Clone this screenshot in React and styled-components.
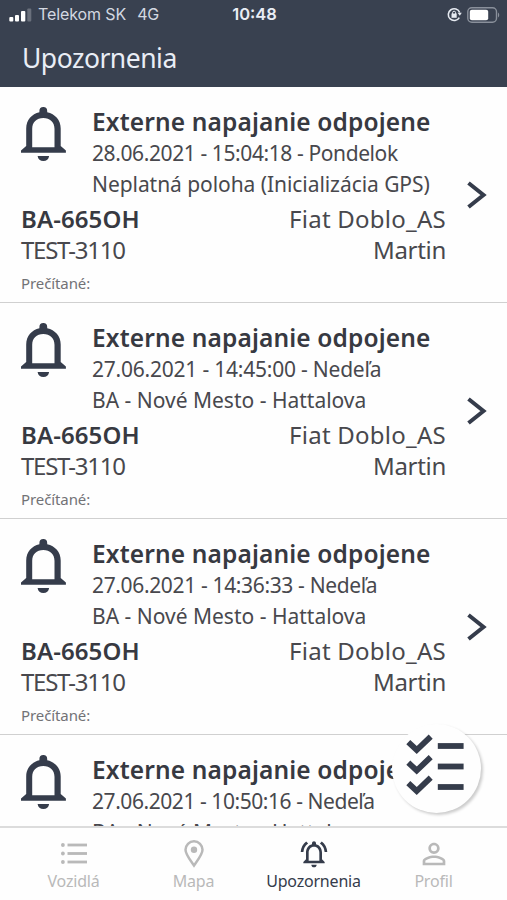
import React from 'react';
import styled, { createGlobalStyle, ThemeProvider } from 'styled-components';
import { MdOutlineNotificationsActive, MdPersonOutline } from 'react-icons/md';

const theme = {
  colors: {
    primary: '#394150',
    icon: '#353c4b',
    white: '#fefefe',
    border: '#d0d0d0',
    text: { title: '#373941', main: '#48484d', hint: '#727276', muted: '#b9b9b9' },
  },
  font: {
    main: "'Noto Sans', 'Open Sans', sans-serif",
    system: "Inter, 'Liberation Sans', sans-serif",
  },
};

const GlobalStyle = createGlobalStyle`
  *, *::before, *::after {
    box-sizing: border-box;
  }
  body {
    margin: 0;
    background: #fefefe;
  }
`;

const Root = styled.div`
  position: relative;
  display: flex;
  flex-direction: column;
  width: 507px;
  height: 900px;
  overflow: hidden;
  white-space: nowrap;
  font-family: ${(p) => p.theme.font.main};
  color: ${(p) => p.theme.colors.text.main};
  background-color: ${(p) => p.theme.colors.white};
`;

const Header = styled.header`
  flex: none;
  height: 87px;
  color: #e9edf5;
  background-color: ${(p) => p.theme.colors.primary};
`;

const StatusBar = styled.div`
  display: grid;
  grid-template-columns: 1fr auto 1fr;
  align-items: center;
  height: 29px;
  padding: 0 7px 0 9px;
  font-family: ${(p) => p.theme.font.system};
  font-size: 16px;
  line-height: 29px;
`;

const Carrier = styled.div`
  display: flex;
  align-items: center;
  color: #d3d8e1;
`;

const CarrierName = styled.span`
  margin-left: 6px;
  letter-spacing: -0.1px;
`;

const Network = styled.span`
  margin-left: 11px;
  letter-spacing: -0.3px;
`;

const Time = styled.div`
  font-size: 16.5px;
  font-weight: 600;
`;

const StatusIcons = styled.div`
  display: flex;
  align-items: center;
  justify-content: flex-end;
  gap: 5px;
`;

const PageTitle = styled.h1`
  margin: 12px 0 0 22px;
  font-size: 26.5px;
  font-weight: 400;
  line-height: 34px;
  letter-spacing: -0.5px;
`;

const List = styled.main`
  flex: 1;
  min-height: 0;
  overflow: hidden;
`;

const Row = styled.article`
  display: flex;
  align-items: center;
  justify-content: space-between;
  height: 216px;
  padding: 0 20px 0 21px;
  border-bottom: 1px solid ${(p) => p.theme.colors.border};
`;

const Main = styled.div`
  align-self: flex-start;
  width: 425px;
  padding-top: 19px;
`;

const Top = styled.div`
  display: flex;
  margin-bottom: 3px;
`;

const BellBox = styled.div`
  flex: none;
  width: 71px;
  padding-top: 1px;
`;

const Title = styled.h2`
  margin: 0;
  font-size: 24.5px;
  font-weight: 600;
  line-height: 32px;
  letter-spacing: 0.14px;
  color: ${(p) => p.theme.colors.text.title};
`;

const Info = styled.div`
  font-size: 21px;
  line-height: 31px;
  letter-spacing: ${(p) => p.$spacing || 0}px;
`;

const Line = styled.div`
  display: flex;
  justify-content: space-between;
  font-size: 24px;
  line-height: 31px;
`;

const Plate = styled.strong`
  font-weight: 600;
  letter-spacing: 0.1px;
  color: ${(p) => p.theme.colors.text.title};
`;

const Value = styled.span`
  letter-spacing: ${(p) => p.$spacing || 0}px;
`;

const Read = styled.div`
  margin-top: 7px;
  font-size: 15px;
  line-height: 22px;
  letter-spacing: -0.1px;
  color: ${(p) => p.theme.colors.text.hint};
`;

const Fab = styled.button`
  position: absolute;
  top: 724px;
  left: 392px;
  width: 89px;
  height: 89px;
  padding: 0;
  border: 0;
  border-radius: 50%;
  background-color: ${(p) => p.theme.colors.white};
  box-shadow: 2px 2px 3px rgba(0, 0, 0, 0.2);
`;

const Nav = styled.nav`
  flex: none;
  display: flex;
  justify-content: center;
  height: 74px;
  padding-top: 9px;
  border-top: 2px solid #dcdcdc;
`;

const NavItem = styled.a`
  display: flex;
  flex-direction: column;
  align-items: center;
  width: 120px;
  font-size: 16px;
  line-height: 20px;
  letter-spacing: -0.2px;
  color: ${(p) => (p.$active ? p.theme.colors.icon : p.theme.colors.text.muted)};
`;

const NavIcon = styled.div`
  display: flex;
  align-items: center;
  justify-content: center;
  height: 34px;
`;

const BellIcon = () => (
  <svg width="45" height="54" viewBox="0 0 45 54" fill={theme.colors.icon} style={{ display: 'block' }}>
    <path
      fillRule="evenodd"
      d="M18.400 5.300V4a3.900 3.900 0 0 1 7.800 0v1.300C34 7 39.700 13 39.700 21.500V39l5.200 4.500v2.300H0v-2.300L5.200 39V21.500C5.200 13 10.800 7 18.400 5.300ZM11.200 40.300h22.300V22c0-7-4.500-11-11.200-11S11.200 15 11.200 22Z"
    />
    <path d="M16.600 49h11.500c-.4 3.200-2.600 5-5.700 5s-5.400-1.800-5.800-5Z" />
  </svg>
);

const ChevronIcon = () => (
  <svg width="20" height="28" viewBox="0 0 20 28" fill="none" stroke={theme.colors.icon} strokeWidth="4">
    <path d="M1.500 2 16.500 14 1.500 26" />
  </svg>
);

const SignalIcon = () => (
  <svg width="23" height="14" viewBox="0 0 23 14" fill="#fff">
    <rect x="0.300" y="9" width="4" height="4.500" rx="1" />
    <rect x="6" y="7" width="4" height="6.500" rx="1" />
    <rect x="12" y="3" width="4.300" height="10.500" rx="1" />
    <rect x="18.300" y="0.500" width="4" height="13" rx="1" opacity="0.25" />
  </svg>
);

const LockIcon = () => (
  <svg width="15" height="15" viewBox="0 0 15 15" fill="none" stroke="#e6eaf1">
    <path d="M12.700 5.500A5.900 5.900 0 1 0 12.300 10.600" strokeWidth="1.600" />
    <path d="M10.600 5.700h4.200l-2 3Z" fill="#e6eaf1" stroke="none" />
    <rect x="4.500" y="6.500" width="5.200" height="4.300" fill="#e6eaf1" stroke="none" />
    <path d="M5.600 7V5.700a1.500 1.500 0 0 1 3 0V7" />
  </svg>
);

const BatteryIcon = () => (
  <svg width="33" height="16" viewBox="0 0 33 16">
    <rect x="0.800" y="0.800" width="28.700" height="14.400" rx="4" fill="none" stroke="#8a909b" strokeWidth="1.400" />
    <rect x="2.800" y="2.800" width="18.400" height="10.400" rx="2" fill="#fff" />
    <path d="M31 5.500v5c1.600-.8 1.600-4.200 0-5Z" fill="#8a909b" />
  </svg>
);

const CheckListIcon = () => (
  <svg width="89" height="89" viewBox="0 0 89 89" fill="none" stroke={theme.colors.icon} strokeWidth="5.800">
    {[0, 20.5, 41].map((y) => (
      <g key={y} transform={`translate(0 ${y})`}>
        <path d="M16.300 18.200 24.700 26 38.700 12.700" />
        <path d="M45.800 22h25.800" />
      </g>
    ))}
  </svg>
);

const ListIcon = () => (
  <svg width="28" height="22" viewBox="0 0 28 22" fill="currentColor">
    {[2, 10.5, 19].map((y) => (
      <g key={y}>
        <circle cx="2.900" cy={y} r="1.900" />
        <rect x="7.500" y={y - 1.4} width="19.500" height="2.800" />
      </g>
    ))}
  </svg>
);

const PinIcon = () => (
  <svg width="20" height="28" viewBox="0 0 20 28" fill="none" stroke="currentColor" strokeWidth="2.500">
    <path d="M10 25.500C6.500 20.500 1.500 14.500 1.500 9.800a8.500 8.500 0 0 1 17 0C18.500 14.500 13.500 20.500 10 25.500Z" />
    <circle cx="10" cy="9.800" r="3.200" fill="currentColor" stroke="none" />
  </svg>
);

const notifications = [
  {
    date: '28.06.2021 - 15:04:18 - Pondelok',
    dateSpacing: -0.4,
    address: 'Neplatná poloha (Inicializácia GPS)',
    addressSpacing: -0.06,
  },
  { date: '27.06.2021 - 14:45:00 - Nedeľa', dateSpacing: -0.22, address: 'BA - Nové Mesto - Hattalova' },
  { date: '27.06.2021 - 14:36:33 - Nedeľa', dateSpacing: -0.35, address: 'BA - Nové Mesto - Hattalova' },
  { date: '27.06.2021 - 10:50:16 - Nedeľa', dateSpacing: -0.44, address: 'BA - Nové Mesto - Hattalova' },
];

const tabs = [
  { label: 'Vozidlá', icon: <ListIcon /> },
  { label: 'Mapa', icon: <PinIcon /> },
  { label: 'Upozornenia', icon: <MdOutlineNotificationsActive size={32} />, active: true },
  { label: 'Profil', icon: <MdPersonOutline size={34} /> },
];

/**
 * Single notification with vehicle and driver
 */
const Notification = ({ date, dateSpacing, address, addressSpacing }) => (
  <Row>
    <Main>
      <Top>
        <BellBox>
          <BellIcon />
        </BellBox>
        <div>
          <Title>Externe napajanie odpojene</Title>
          <Info $spacing={dateSpacing}>{date}</Info>
          <Info $spacing={addressSpacing}>{address}</Info>
        </div>
      </Top>
      <Line>
        <Plate>BA-665OH</Plate>
        <Value $spacing={0.25}>Fiat Doblo_AS</Value>
      </Line>
      <Line>
        <Value $spacing={-1.25}>TEST-3110</Value>
        <Value $spacing={-0.3}>Martin</Value>
      </Line>
      <Read>Prečítané:</Read>
    </Main>
    <ChevronIcon />
  </Row>
);

const App = () => (
  <ThemeProvider theme={theme}>
    <GlobalStyle />
    <Root>
      <Header>
        <StatusBar>
          <Carrier>
            <SignalIcon />
            <CarrierName>Telekom SK</CarrierName>
            <Network>4G</Network>
          </Carrier>
          <Time>10:48</Time>
          <StatusIcons>
            <LockIcon />
            <BatteryIcon />
          </StatusIcons>
        </StatusBar>
        <PageTitle>Upozornenia</PageTitle>
      </Header>

      <List>
        {notifications.map((item) => (
          <Notification key={item.date} {...item} />
        ))}
      </List>

      <Nav>
        {tabs.map(({ label, icon, active }) => (
          <NavItem key={label} $active={active}>
            <NavIcon>{icon}</NavIcon>
            {label}
          </NavItem>
        ))}
      </Nav>

      <Fab aria-label="Označiť všetko">
        <CheckListIcon />
      </Fab>
    </Root>
  </ThemeProvider>
);

export default App;
